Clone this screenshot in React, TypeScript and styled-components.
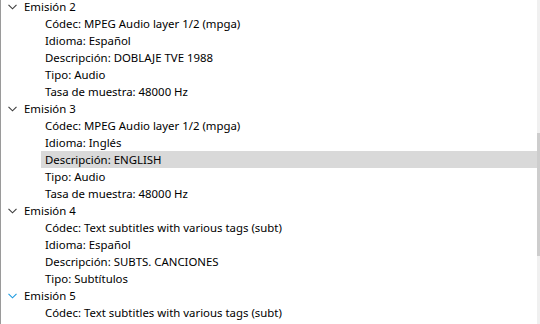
import styled, { createGlobalStyle } from "styled-components";

const Global = createGlobalStyle`
  html, body {
    margin: 0;
    padding: 0;
    background: #ffffff;
  }
`;

type Stream = {
  title: string;
  hover?: boolean;
  fields: string[];
};

const streams: Stream[] = [
  {
    title: "Emisión 2",
    fields: [
      "Códec: MPEG Audio layer 1/2 (mpga)",
      "Idioma: Español",
      "Descripción: DOBLAJE TVE 1988",
      "Tipo: Audio",
      "Tasa de muestra: 48000 Hz",
    ],
  },
  {
    title: "Emisión 3",
    fields: [
      "Códec: MPEG Audio layer 1/2 (mpga)",
      "Idioma: Inglés",
      "Descripción: ENGLISH",
      "Tipo: Audio",
      "Tasa de muestra: 48000 Hz",
    ],
  },
  {
    title: "Emisión 4",
    fields: [
      "Códec: Text subtitles with various tags (subt)",
      "Idioma: Español",
      "Descripción: SUBTS. CANCIONES",
      "Tipo: Subtítulos",
    ],
  },
  {
    title: "Emisión 5",
    hover: true,
    fields: ["Códec: Text subtitles with various tags (subt)"],
  },
];

export default function App() {
  return (
    <>
      <Global />
      <Frame>
        <Tree>
          {streams.map((s) => (
            <Group key={s.title}>
              <Row>
                <Chevron $hover={s.hover}>
                  <svg width="9" height="6" viewBox="0 0 9 6">
                    <path d="M0.5 0.8 L4.5 4.8 L8.5 0.8" fill="none" stroke="currentColor" strokeWidth="1.1" />
                  </svg>
                </Chevron>
                <Label>{s.title}</Label>
              </Row>
              {s.fields.map((f) => (
                <Leaf key={f} $selected={f === "Descripción: ENGLISH"}>
                  <Label>{f}</Label>
                </Leaf>
              ))}
            </Group>
          ))}
        </Tree>
        <ScrollTrack>
          <ScrollThumb />
        </ScrollTrack>
      </Frame>
    </>
  );
}

const Frame = styled.div`
  width: 540px;
  height: 324px;
  box-sizing: border-box;
  border-left: 1px solid #9a9a9a;
  display: flex;
  overflow: hidden;
  font-family: "Noto Sans", "Open Sans", sans-serif;
  font-size: 11.4px;
  color: #000000;
`;

const Tree = styled.div`
  flex: 1;
  display: flex;
  flex-direction: column;
  margin-top: -2px;
`;

const Group = styled.div`
  display: flex;
  flex-direction: column;
`;

const Row = styled.div`
  height: 17px;
  display: flex;
  align-items: center;
  padding-left: 7px;
`;

const Chevron = styled.span<{ $hover?: boolean }>`
  width: 9px;
  height: 17px;
  display: flex;
  align-items: center;
  margin-right: 7px;
  color: ${(p) => (p.$hover ? "#1e9be0" : "#3c3c3c")};
`;

const Leaf = styled.div<{ $selected?: boolean }>`
  height: 17px;
  display: flex;
  align-items: center;
  margin-left: 40px;
  padding-left: 4px;
  background: ${(p) => (p.$selected ? "#d9d9d9" : "transparent")};
`;

const Label = styled.span`
  white-space: nowrap;
  line-height: 17px;
`;

const ScrollTrack = styled.div`
  width: 3px;
  background: #f0f0f0;
  padding-top: 133px;
`;

const ScrollThumb = styled.div`
  height: 123px;
  background: #cdcdcd;
`;
